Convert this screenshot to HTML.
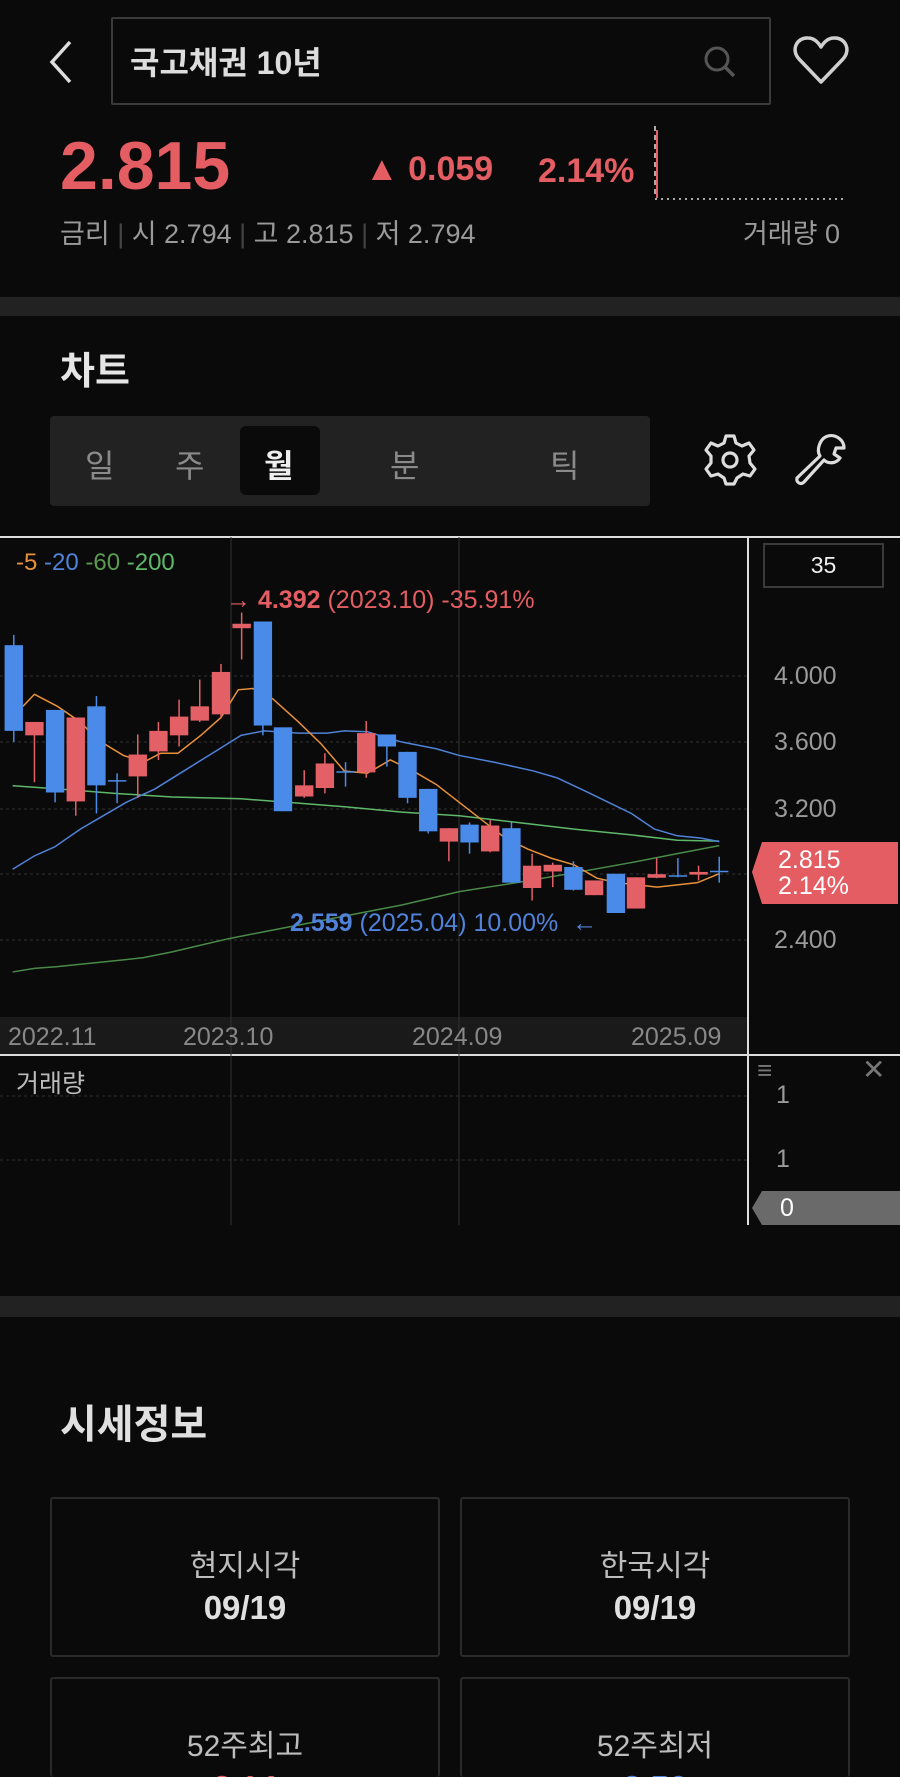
<!DOCTYPE html>
<html style="overflow:hidden;height:1777px"><head><meta charset="utf-8"><style>
*{margin:0;padding:0;box-sizing:border-box}
html,body{width:900px;height:1777px;overflow:hidden}
body{background:#0a0a0a;font-family:"Liberation Sans","Noto Sans CJK KR",sans-serif;color:#e6e6e6}
#w{position:relative;width:900px;height:1777px;overflow:hidden}
.a{position:absolute;white-space:nowrap}
.card{position:absolute;border:2px solid #2a2a2a;border-radius:3px;text-align:center;overflow:hidden}
.card .l{position:absolute;left:0;right:0;top:42px;font-size:30px;color:#bdbdbd}
.card .v{position:absolute;left:0;right:0;top:90px;font-size:33px;font-weight:bold;color:#e0e0e0}
</style></head><body><div id="w">
<svg class="a" style="left:44px;top:38px" width="34" height="48" viewBox="0 0 34 48"><path d="M26 4 L8 24 L26 44" fill="none" stroke="#ddd" stroke-width="3.5"/></svg>
<div class="a" style="left:111px;top:17px;width:660px;height:88px;border:2px solid #3a3a3a;border-radius:2px"></div>
<div class="a" style="left:130px;top:38px;font-size:32px;font-weight:bold;color:#ddd">국고채권 10년</div>
<svg class="a" style="left:702px;top:44px" width="36" height="36" viewBox="0 0 36 36"><circle cx="15" cy="15" r="11" fill="none" stroke="#555" stroke-width="3"/><path d="M23 23 L32 32" stroke="#555" stroke-width="3.5"/></svg>
<svg class="a" style="left:792px;top:34px" width="58" height="52" viewBox="0 0 58 52"><path d="M29 48 L7 25 C-2 15 6 3 16 4 C22 4 26 8 29 13 C32 8 36 4 42 4 C52 3 60 15 51 25 Z" fill="none" stroke="#cfcfcf" stroke-width="3.5" stroke-linejoin="round"/></svg>
<div class="a" style="left:60px;top:127px;font-size:68px;font-weight:bold;color:#e35d63">2.815</div>
<div class="a" style="left:365px;top:150px;font-size:34px;font-weight:bold;color:#e35d63">▲ 0.059</div>
<div class="a" style="left:538px;top:152px;font-size:34px;font-weight:bold;color:#e35d63">2.14%</div>
<svg class="a" style="left:650px;top:124px" width="200" height="80"><line x1="5" y1="2" x2="5" y2="74" stroke="#aaa" stroke-width="2" stroke-dasharray="5,4"/><line x1="7" y1="6" x2="7" y2="74" stroke="#e35d63" stroke-width="2"/><line x1="5" y1="75" x2="196" y2="75" stroke="#aaa" stroke-width="2" stroke-dasharray="2,4"/></svg>
<div class="a" style="left:60px;top:212px;font-size:27px;color:#9a9a9a">금리 <span style="color:#444">|</span> 시 2.794 <span style="color:#444">|</span> 고 2.815 <span style="color:#444">|</span> 저 2.794</div>
<div class="a" style="right:60px;top:212px;font-size:27px;color:#9a9a9a">거래량 0</div>
<div class="a" style="left:0;top:297px;width:900px;height:19px;background:#222"></div>
<div class="a" style="left:60px;top:340px;font-size:38px;font-weight:bold;color:#e6e6e6">차트</div>
<div class="a" style="left:50px;top:416px;width:600px;height:90px;background:#222;border-radius:4px"></div>
<div class="a" style="left:240px;top:426px;width:80px;height:69px;background:#0a0a0a;border-radius:6px"></div>
<div class="a" style="left:85px;top:441px;font-size:32px;color:#8a8a8a">일</div>
<div class="a" style="left:175px;top:441px;font-size:32px;color:#8a8a8a">주</div>
<div class="a" style="left:264px;top:441px;font-size:32px;font-weight:bold;color:#eee">월</div>
<div class="a" style="left:390px;top:441px;font-size:32px;color:#8a8a8a">분</div>
<div class="a" style="left:550px;top:441px;font-size:32px;color:#8a8a8a">틱</div>
<svg class="a" style="left:702px;top:432px" width="56" height="56" viewBox="0 0 56 56"><path d="M24 4 H32 L34 11 L40 14 L47 11 L52 18 L47 24 L48 31 L53 37 L48 44 L41 42 L35 46 L32 52 H24 L22 46 L16 42 L9 44 L4 37 L9 31 L9 24 L4 18 L9 11 L16 14 L22 11 Z" fill="none" stroke="#ddd" stroke-width="3.2" stroke-linejoin="round"/><circle cx="28" cy="28" r="7" fill="none" stroke="#ddd" stroke-width="3.2"/></svg>
<svg class="a" style="left:792px;top:432px" width="56" height="56" viewBox="0 0 56 56"><path d="M36 4 C44 2 52 8 52 16 L44 16 L42 22 L48 26 C44 32 36 32 32 28 L12 50 C9 53 4 51 5 46 L28 24 C24 18 28 6 36 4 Z" fill="none" stroke="#ddd" stroke-width="3.2" stroke-linejoin="round"/></svg>

<svg class="a" style="left:0;top:0" width="900" height="1240">
<line x1="0" y1="537" x2="900" y2="537" stroke="#ddd" stroke-width="2"/>
<rect x="0" y="1017" width="748" height="37" fill="#1a1a1a"/>
<line x1="0" y1="1055" x2="900" y2="1055" stroke="#ddd" stroke-width="2"/>
<line x1="748" y1="537" x2="748" y2="1225" stroke="#ddd" stroke-width="2"/>
<line x1="231" y1="537" x2="231" y2="1225" stroke="#333" stroke-width="1"/>
<line x1="459" y1="537" x2="459" y2="1225" stroke="#333" stroke-width="1"/>
<g stroke="#333" stroke-dasharray="3,3" stroke-width="1">
<line x1="0" y1="676" x2="748" y2="676"/><line x1="0" y1="742" x2="748" y2="742"/><line x1="0" y1="809" x2="748" y2="809"/><line x1="0" y1="874" x2="748" y2="874"/><line x1="0" y1="940" x2="748" y2="940"/><line x1="0" y1="1096" x2="748" y2="1096"/><line x1="0" y1="1160" x2="748" y2="1160"/>
</g>
<g transform="translate(0,530) scale(0.574,0.4464)" fill="none" stroke-width="1.5">
<polyline vector-effect="non-scaling-stroke" stroke="#4a8a48" points="22,990 60,982 100,978 200,965 250,958 300,945 350,930 400,915 460,900 540,880 620,860 700,840 800,810 900,790 1000,768 1100,745 1180,725 1253,707"/>
<polyline vector-effect="non-scaling-stroke" stroke="#5fb86a" points="22,573 100,580 200,590 300,598 420,602 500,610 600,620 700,632 800,640 900,655 1000,670 1100,683 1180,695 1253,697"/>
<polyline vector-effect="non-scaling-stroke" stroke="#4f82d8" points="22,760 60,730 95,710 140,670 180,640 220,610 270,580 320,540 370,500 420,460 460,450 520,455 570,455 600,450 640,452 700,475 760,490 800,505 860,520 930,540 970,555 1020,585 1060,610 1100,635 1140,670 1180,685 1220,690 1253,698"/>
<polyline vector-effect="non-scaling-stroke" stroke="#e8913a" points="40,395 60,368 100,395 140,430 170,470 215,505 250,520 280,500 310,500 350,460 385,420 415,358 440,355 475,378 520,430 560,480 600,540 640,545 680,515 720,540 760,570 800,610 840,650 880,690 920,715 960,735 1000,750 1040,780 1075,790 1110,795 1145,800 1180,795 1215,790 1253,770"/>
<g stroke="#4a8ae8">
<line vector-effect="non-scaling-stroke" x1="24" y1="235" x2="24" y2="475"/><line vector-effect="non-scaling-stroke" x1="96" y1="403" x2="96" y2="610"/><line vector-effect="non-scaling-stroke" x1="168" y1="372" x2="168" y2="635"/><line vector-effect="non-scaling-stroke" x1="204" y1="545" x2="204" y2="612"/><line vector-effect="non-scaling-stroke" x1="458" y1="205" x2="458" y2="460"/><line vector-effect="non-scaling-stroke" x1="602" y1="520" x2="602" y2="575"/><line vector-effect="non-scaling-stroke" x1="674" y1="458" x2="674" y2="530"/><line vector-effect="non-scaling-stroke" x1="710" y1="497" x2="710" y2="612"/><line vector-effect="non-scaling-stroke" x1="746" y1="580" x2="746" y2="680"/><line vector-effect="non-scaling-stroke" x1="818" y1="655" x2="818" y2="725"/><line vector-effect="non-scaling-stroke" x1="891" y1="655" x2="891" y2="790"/><line vector-effect="non-scaling-stroke" x1="999" y1="742" x2="999" y2="808"/><line vector-effect="non-scaling-stroke" x1="1181" y1="735" x2="1181" y2="778"/><line vector-effect="non-scaling-stroke" x1="1253" y1="732" x2="1253" y2="790"/>
<line vector-effect="non-scaling-stroke" x1="188" y1="562" x2="220" y2="562"/><line vector-effect="non-scaling-stroke" x1="586" y1="542" x2="618" y2="542"/><line vector-effect="non-scaling-stroke" x1="1165" y1="775" x2="1197" y2="775"/><line vector-effect="non-scaling-stroke" x1="1237" y1="765" x2="1269" y2="765"/>
</g>
<g fill="#4a8ae8" stroke="none">
<rect x="8" y="258" width="32" height="192"/><rect x="80" y="403" width="32" height="185"/><rect x="152" y="395" width="32" height="177"/><rect x="442" y="205" width="32" height="233"/><rect x="477" y="442" width="32" height="188"/><rect x="658" y="458" width="32" height="27"/><rect x="694" y="497" width="32" height="103"/><rect x="730" y="580" width="32" height="95"/><rect x="802" y="660" width="32" height="40"/><rect x="875" y="668" width="32" height="122"/><rect x="983" y="755" width="32" height="51"/><rect x="1057" y="770" width="32" height="88"/>
</g>
<g stroke="#e36067">
<line vector-effect="non-scaling-stroke" x1="60" y1="430" x2="60" y2="565"/><line vector-effect="non-scaling-stroke" x1="132" y1="420" x2="132" y2="640"/><line vector-effect="non-scaling-stroke" x1="240" y1="458" x2="240" y2="600"/><line vector-effect="non-scaling-stroke" x1="276" y1="430" x2="276" y2="515"/><line vector-effect="non-scaling-stroke" x1="312" y1="380" x2="312" y2="485"/><line vector-effect="non-scaling-stroke" x1="348" y1="335" x2="348" y2="430"/><line vector-effect="non-scaling-stroke" x1="385" y1="300" x2="385" y2="420"/><line vector-effect="non-scaling-stroke" x1="421" y1="185" x2="421" y2="290"/><line vector-effect="non-scaling-stroke" x1="530" y1="538" x2="530" y2="600"/><line vector-effect="non-scaling-stroke" x1="566" y1="500" x2="566" y2="590"/><line vector-effect="non-scaling-stroke" x1="638" y1="428" x2="638" y2="555"/><line vector-effect="non-scaling-stroke" x1="782" y1="668" x2="782" y2="742"/><line vector-effect="non-scaling-stroke" x1="854" y1="650" x2="854" y2="722"/><line vector-effect="non-scaling-stroke" x1="927" y1="725" x2="927" y2="830"/><line vector-effect="non-scaling-stroke" x1="963" y1="745" x2="963" y2="800"/><line vector-effect="non-scaling-stroke" x1="1035" y1="785" x2="1035" y2="818"/><line vector-effect="non-scaling-stroke" x1="1108" y1="778" x2="1108" y2="848"/><line vector-effect="non-scaling-stroke" x1="1144" y1="735" x2="1144" y2="780"/><line vector-effect="non-scaling-stroke" x1="1217" y1="752" x2="1217" y2="785"/>
</g>
<g fill="#e36067" stroke="none">
<rect x="44" y="430" width="32" height="30"/><rect x="116" y="420" width="32" height="188"/><rect x="224" y="503" width="32" height="49"/><rect x="260" y="450" width="32" height="46"/><rect x="296" y="418" width="32" height="42"/><rect x="332" y="395" width="32" height="32"/><rect x="369" y="318" width="32" height="95"/><rect x="405" y="210" width="32" height="10"/><rect x="514" y="572" width="32" height="25"/><rect x="550" y="523" width="32" height="55"/><rect x="622" y="455" width="32" height="88"/><rect x="766" y="668" width="32" height="30"/><rect x="838" y="662" width="32" height="58"/><rect x="911" y="752" width="32" height="50"/><rect x="947" y="750" width="32" height="15"/><rect x="1019" y="785" width="32" height="33"/><rect x="1092" y="778" width="32" height="70"/><rect x="1128" y="771" width="32" height="8"/><rect x="1201" y="766" width="32" height="6"/>
</g>
</g>
<polygon points="752,872 762,842 898,842 898,904 762,904" fill="#e35d63"/>
</svg>
<div class="a" style="left:16px;top:549px;font-size:24px"><span style="color:#e8913a">-5</span> <span style="color:#4f82d8">-20</span> <span style="color:#5a9a50">-60</span> <span style="color:#5fb86a">-200</span></div>
<div class="a" style="left:226px;top:586px;font-size:25px;color:#e35d63">→ <b>4.392</b> (2023.10) -35.91%</div>
<div class="a" style="left:290px;top:909px;font-size:25px;color:#4f82d8"><b>2.559</b> (2025.04) 10.00% &nbsp;←</div>
<div class="a" style="left:763px;top:543px;width:121px;height:45px;border:2px solid #3a3a3a;text-align:center;font-size:23px;line-height:41px;color:#eee">35</div>
<div class="a" style="left:774px;top:662px;font-size:25px;color:#9a9a9a">4.000</div>
<div class="a" style="left:774px;top:728px;font-size:25px;color:#9a9a9a">3.600</div>
<div class="a" style="left:774px;top:795px;font-size:25px;color:#9a9a9a">3.200</div>
<div class="a" style="left:774px;top:926px;font-size:25px;color:#9a9a9a">2.400</div>
<div class="a" style="left:778px;top:847px;font-size:25px;line-height:26px;color:#fff">2.815<br>2.14%</div>
<div class="a" style="left:8px;top:1023px;font-size:25px;color:#888">2022.11</div>
<div class="a" style="left:183px;top:1023px;font-size:25px;color:#888">2023.10</div>
<div class="a" style="left:412px;top:1023px;font-size:25px;color:#888">2024.09</div>
<div class="a" style="left:631px;top:1023px;font-size:25px;color:#888">2025.09</div>
<div class="a" style="left:16px;top:1064px;font-size:25px;color:#bbb">거래량</div>
<div class="a" style="left:757px;top:1055px;font-size:26px;color:#777">≡</div>
<div class="a" style="left:862px;top:1053px;font-size:28px;color:#777">✕</div>
<div class="a" style="left:776px;top:1081px;font-size:25px;color:#9a9a9a">1</div>
<div class="a" style="left:776px;top:1145px;font-size:25px;color:#9a9a9a">1</div>
<svg class="a" style="left:750px;top:1190px" width="150" height="36"><polygon points="2,18 12,1 150,1 150,35 12,35" fill="#6a6a6a"/></svg>
<div class="a" style="left:780px;top:1194px;font-size:25px;color:#fff">0</div>

<div class="a" style="left:0;top:1296px;width:900px;height:21px;background:#222"></div>
<div class="a" style="left:60px;top:1392px;font-size:40px;font-weight:bold;color:#e0e0e0">시세정보</div>
<div class="card" style="left:50px;top:1497px;width:390px;height:160px"><div class="l">현지시각</div><div class="v">09/19</div></div>
<div class="card" style="left:460px;top:1497px;width:390px;height:160px"><div class="l">한국시각</div><div class="v">09/19</div></div>
<div class="card" style="left:50px;top:1677px;width:390px;height:100px;border-bottom:none"><div class="l">52주최고</div><div class="v" style="color:#e35d63">3.14</div></div>
<div class="card" style="left:460px;top:1677px;width:390px;height:100px;border-bottom:none"><div class="l">52주최저</div><div class="v" style="color:#4f82d8">2.56</div></div>
</div></body></html>
